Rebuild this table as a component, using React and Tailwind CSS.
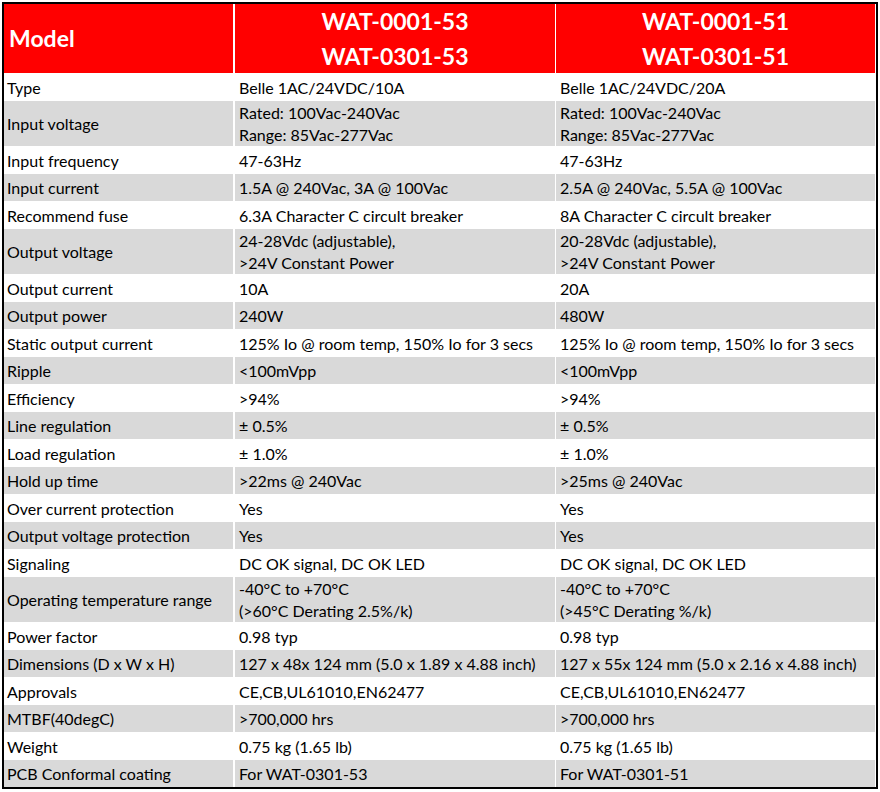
import React from "react";

const rows = [
  ["Type", ["Belle 1AC/24VDC/10A"], ["Belle 1AC/24VDC/20A"]],
  ["Input voltage", ["Rated: 100Vac-240Vac", "Range: 85Vac-277Vac"], ["Rated: 100Vac-240Vac", "Range: 85Vac-277Vac"]],
  ["Input frequency", ["47-63Hz"], ["47-63Hz"]],
  ["Input current", ["1.5A @ 240Vac, 3A @ 100Vac"], ["2.5A @ 240Vac, 5.5A @ 100Vac"]],
  ["Recommend fuse", ["6.3A Character C circult breaker"], ["8A Character C circult breaker"]],
  ["Output voltage", ["24-28Vdc (adjustable),", ">24V Constant Power"], ["20-28Vdc (adjustable),", ">24V Constant Power"]],
  ["Output current", ["10A"], ["20A"]],
  ["Output power", ["240W"], ["480W"]],
  ["Static output current", ["125% Io @ room temp, 150% Io for 3 secs"], ["125% Io @ room temp, 150% Io for 3 secs"]],
  ["Ripple", ["<100mVpp"], ["<100mVpp"]],
  ["Efficiency", [">94%"], [">94%"]],
  ["Line regulation", ["± 0.5%"], ["± 0.5%"]],
  ["Load regulation", ["± 1.0%"], ["± 1.0%"]],
  ["Hold up time", [">22ms @ 240Vac"], [">25ms @ 240Vac"]],
  ["Over current protection", ["Yes"], ["Yes"]],
  ["Output voltage protection", ["Yes"], ["Yes"]],
  ["Signaling", ["DC OK signal, DC OK LED"], ["DC OK signal, DC OK LED"]],
  ["Operating temperature range", ["-40°C to +70°C", "(>60°C Derating 2.5%/k)"], ["-40°C to +70°C", "(>45°C Derating %/k)"]],
  ["Power factor", ["0.98 typ"], ["0.98 typ"]],
  ["Dimensions (D x W x H)", ["127 x 48x 124 mm (5.0 x 1.89 x 4.88 inch)"], ["127 x 55x 124 mm (5.0 x 2.16 x 4.88 inch)"]],
  ["Approvals", ["CE,CB,UL61010,EN62477"], ["CE,CB,UL61010,EN62477"]],
  ["MTBF(40degC)", [">700,000 hrs"], [">700,000 hrs"]],
  ["Weight", ["0.75 kg (1.65 lb)"], ["0.75 kg (1.65 lb)"]],
  ["PCB Conformal coating", ["For WAT-0301-53"], ["For WAT-0301-51"]],
];

function Cell({ lines, gray, double, first }) {
  return (
    <div
      className={
        (gray ? "bg-[#d9d9d9] " : "bg-white ") +
        (double ? "h-[45.5px] " : "h-[27.5px] ") +
        (first ? "pl-[3px] " : "pl-[4px] ") +
        "flex flex-col justify-center pt-[2px] whitespace-nowrap overflow-hidden"
      }
    >
      {lines.map((l, i) => (
        <div key={i} className="leading-[22px]">
          {l}
        </div>
      ))}
    </div>
  );
}

export default function App() {
  return (
    <div className="bg-white w-[880px] h-[792px] pt-[2px] pl-[2px]" style={{ fontFamily: "Lato, 'Open Sans', sans-serif" }}>
      <div className="w-[876px] border-2 border-black bg-white text-black text-[16px]">
        <div className="grid grid-cols-[230px_320px_319px] gap-x-[1px]">
          <div className="bg-[#ff0000] h-[69px] flex items-center pl-[5px] mr-[1px] text-white font-bold text-[23px]">
            Model
          </div>
          <div className="bg-[#ff0000] h-[69px] flex flex-col items-center justify-center pt-[1px] text-white font-bold text-[23px] leading-[35px]">
            <div>WAT-0001-53</div>
            <div>WAT-0301-53</div>
          </div>
          <div className="bg-[#ff0000] h-[69px] flex flex-col items-center justify-center pt-[1px] text-white font-bold text-[23px] leading-[35px]">
            <div>WAT-0001-51</div>
            <div>WAT-0301-51</div>
          </div>
          {rows.map(([label, a, b], i) => {
            const gray = i % 2 === 1;
            const double = a.length > 1;
            return (
              <React.Fragment key={label}>
                <div className="mr-[1px]">
                  <Cell lines={[label]} gray={gray} double={double} first />
                </div>
                <Cell lines={a} gray={gray} double={double} />
                <Cell lines={b} gray={gray} double={double} />
              </React.Fragment>
            );
          })}
        </div>
      </div>
    </div>
  );
}
